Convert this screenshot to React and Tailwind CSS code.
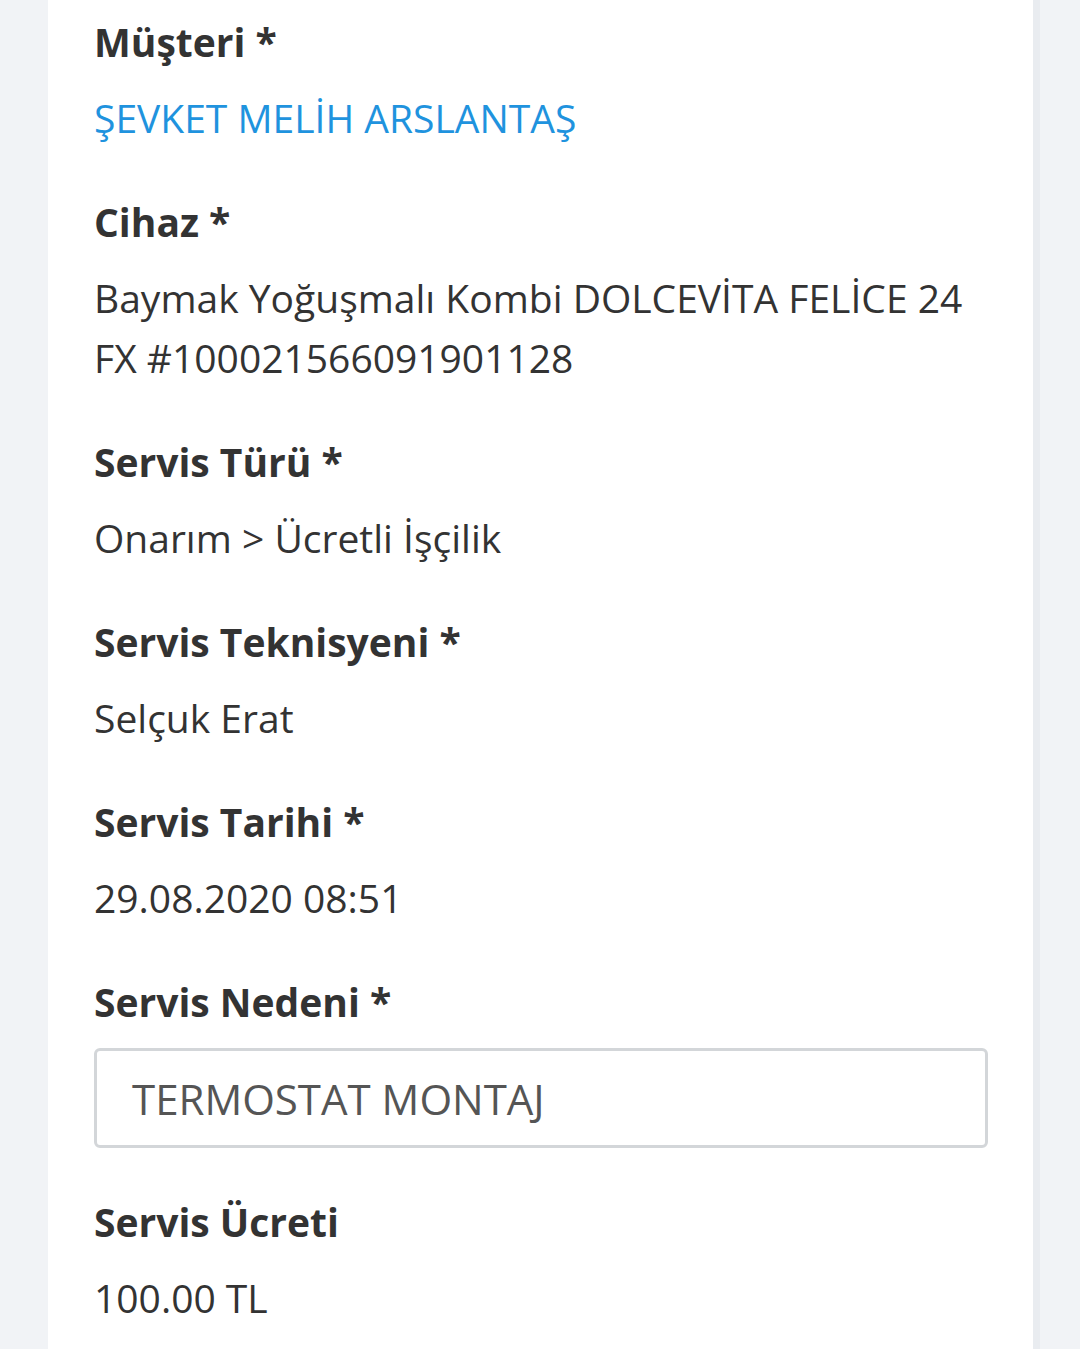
import React from 'react';

const fields = [
  { label: 'Müşteri *', value: 'ŞEVKET MELİH ARSLANTAŞ', link: true },
  { label: 'Cihaz *', value: 'Baymak Yoğuşmalı Kombi DOLCEVİTA FELİCE 24 FX #100021566091901128' },
  { label: 'Servis Türü *', value: 'Onarım > Ücretli İşçilik' },
  { label: 'Servis Teknisyeni *', value: 'Selçuk Erat' },
  { label: 'Servis Tarihi *', value: '29.08.2020 08:51' },
];

const Label = ({ children }) => (
  <div className="text-[39px] leading-[60px] font-bold text-[#333333] mb-4">{children}</div>
);

const App = () => {
  return (
    <div
      className="min-h-screen bg-[#f1f3f6] pl-12 pr-[40px]"
      style={{ fontFamily: '"Open Sans", "Noto Sans", sans-serif' }}
    >
      <div className="bg-white min-h-[1349px] pl-[46px] pr-[45px] pt-3 border-r-[7px] border-[#e9ecf0]">
        {fields.map((f) => (
          <div key={f.label} className="mb-[44px]">
            <Label>{f.label}</Label>
            <div
              className={
                'text-[39px] leading-[60px] ' +
                (f.link ? 'text-[#1f93de]' : 'text-[#333333]')
              }
            >
              {f.value}
            </div>
          </div>
        ))}
        <div className="mb-[44px]">
          <Label>Servis Nedeni *</Label>
          <div className="h-[100px] border-[3px] border-[#d3d6d9] rounded-md flex items-center pl-[35px] text-[42px] text-[#555555]">
            TERMOSTAT MONTAJ
          </div>
        </div>
        <div>
          <Label>Servis Ücreti</Label>
          <div className="text-[39px] leading-[60px] text-[#333333]">100.00 TL</div>
        </div>
      </div>
    </div>
  );
};

export default App;
